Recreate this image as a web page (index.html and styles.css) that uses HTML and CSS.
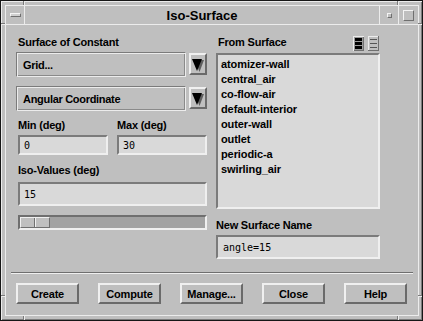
FILE: index.html
```html
<!DOCTYPE html>
<html>
<head>
<meta charset="utf-8">
<title>Iso-Surface</title>
<link rel="stylesheet" href="styles.css">
</head>
<body>
<div class="window">
  <div class="frame">
    <div class="titlebar">
      <div class="tb-btn tb-menu"><span class="menu-bar"></span></div>
      <div class="tb-title">Iso-Surface</div>
      <div class="tb-btn tb-min"><span class="min-box"></span></div>
      <div class="tb-btn tb-max"><span class="max-box"></span></div>
    </div>
    <div class="client">
      <div class="main">
        <div class="col-left">
          <div class="label ind">Surface of Constant</div>
          <div class="combo-row first">
            <div class="combo">Grid...</div>
            <div class="arrow-btn"><svg width="12" height="13" viewBox="0 0 12 13"><polygon points="3,1 12,1 7.5,13" fill="#5e5e5e"/><polygon points="0,0 10,0 5,12" fill="#000"/></svg></div>
          </div>
          <div class="combo-row second">
            <div class="combo">Angular Coordinate</div>
            <div class="arrow-btn"><svg width="12" height="13" viewBox="0 0 12 13"><polygon points="3,1 12,1 7.5,13" fill="#5e5e5e"/><polygon points="0,0 10,0 5,12" fill="#000"/></svg></div>
          </div>
          <div class="pair pair-labels">
            <div class="label half">Min (deg)</div>
            <div class="label half">Max (deg)</div>
          </div>
          <div class="pair pair-fields">
            <div class="field small half">0</div>
            <div class="field small half">30</div>
          </div>
          <div class="label ind iso-label">Iso-Values (deg)</div>
          <div class="field iso">15</div>
          <div class="slider"><div class="thumb"><span class="thumb-l"></span><span class="thumb-r"></span></div></div>
        </div>
        <div class="col-right">
          <div class="list-head">
            <div class="label">From Surface</div>
            <div class="icons">
              <svg class="ico" width="11" height="15" viewBox="0 0 11 15">
                <rect x="0" y="0" width="11" height="15" fill="#ececec"/>
                <rect x="1" y="1" width="10" height="14" fill="#6f6f6f"/>
                <rect x="1" y="1" width="9" height="13" fill="#9a9a9a"/>
                <rect x="2" y="2" width="7" height="3" fill="#000"/>
                <rect x="2" y="6" width="7" height="3" fill="#000"/>
                <rect x="2" y="10" width="7" height="3" fill="#000"/>
              </svg>
              <svg class="ico" width="11" height="15" viewBox="0 0 11 15">
                <rect x="0" y="0" width="11" height="15" fill="#6f6f6f"/>
                <rect x="0" y="0" width="10" height="14" fill="#ececec"/>
                <rect x="1" y="1" width="9" height="13" fill="#bfbfbf"/>
                <rect x="2" y="3" width="7" height="1" fill="#555"/>
                <rect x="2" y="7" width="7" height="1" fill="#555"/>
                <rect x="2" y="11" width="7" height="1" fill="#555"/>
              </svg>
            </div>
          </div>
          <div class="list">
            <div class="item">atomizer-wall</div>
            <div class="item">central_air</div>
            <div class="item">co-flow-air</div>
            <div class="item">default-interior</div>
            <div class="item">outer-wall</div>
            <div class="item">outlet</div>
            <div class="item">periodic-a</div>
            <div class="item">swirling_air</div>
          </div>
          <div class="label name-label">New Surface Name</div>
          <div class="field name">angle=15</div>
        </div>
      </div>
      <div class="separator"></div>
      <div class="buttons">
        <div class="btn">Create</div>
        <div class="btn">Compute</div>
        <div class="btn">Manage...</div>
        <div class="btn">Close</div>
        <div class="btn">Help</div>
      </div>
    </div>
  </div>
  <span class="mark mv mt ml"></span>
  <span class="mark mv mt mr"></span>
  <span class="mark mv mb ml"></span>
  <span class="mark mv mb mr"></span>
  <span class="mark mh hl ht"></span>
  <span class="mark mh hr ht"></span>
  <span class="mark mh hl hb"></span>
  <span class="mark mh hr hb"></span>
</div>
</body>
</html>
```

FILE: styles.css
```css
* { box-sizing: border-box; }
html, body { margin: 0; padding: 0; }
body {
  width: 423px;
  height: 321px;
  overflow: hidden;
  background: #bfbfbf;
  font-family: "Liberation Sans", Arial, sans-serif;
  color: #000;
}

.window {
  position: relative;
  width: 423px;
  height: 321px;
  border: 1px solid #161616;
  background: #bfbfbf;
  padding: 4px 3px 4px 4px;
  box-shadow: inset 1px 1px 0 #ececec, inset -1px -1px 0 #7b7b7b;
}

.frame {
  height: 100%;
  border: 1px solid #ececec;
  display: flex;
  flex-direction: column;
}

/* title bar */
.titlebar {
  flex: none;
  height: 19px;
  display: flex;
  border-bottom: 1px solid #ececec;
}
.tb-btn {
  flex: none;
  display: flex;
  align-items: center;
  justify-content: center;
}
.tb-menu { width: 19px; border-right: 1px solid #ececec; justify-content: flex-start; padding-left: 4px; }
.tb-min { width: 19px; border-left: 1px solid #ececec; }
.tb-max { width: 20px; border-left: 1px solid #ececec; }
.tb-title {
  flex: 1;
  text-align: center;
  font-weight: bold;
  font-size: 13px;
  line-height: 18px;
  padding-top: 1px;
}
.menu-bar {
  display: block;
  width: 11px;
  height: 4px;
  border: 1px solid;
  border-color: #f4f4f4 #6f6f6f #6f6f6f #f4f4f4;
  background: #cfcfcf;
}
.min-box {
  display: block;
  width: 5px;
  height: 5px;
  border: 1px solid;
  border-color: #f4f4f4 #6f6f6f #6f6f6f #f4f4f4;
}
.max-box {
  display: block;
  width: 11px;
  height: 11px;
  margin-right: 1px;
  border: 1px solid;
  border-color: #f4f4f4 #6f6f6f #6f6f6f #f4f4f4;
}

/* client */
.client {
  flex: 1;
  display: flex;
  flex-direction: column;
  padding: 11px 0 0 10px;
}
.main { display: flex; gap: 9px; }
.col-left { width: 191px; display: flex; flex-direction: column; }
.col-right { width: 164px; display: flex; flex-direction: column; }

.label {
  font-weight: bold;
  font-size: 11px;
  line-height: 13px;
  height: 13px;
  white-space: nowrap;
  letter-spacing: -0.2px;
}
.ind { margin-left: 2px; }

.combo-row { display: flex; gap: 3px; align-items: flex-start; }
.combo-row.first { margin-top: 3px; }
.combo-row.second { margin-top: 9px; }
.combo {
  width: 170px;
  height: 25px;
  border: 1px solid;
  border-color: #7b7b7b #ececec #ececec #7b7b7b;
  box-shadow: inset 1px 1px 0 #ececec, inset -1px -1px 0 #8a8a8a;
  padding-left: 6px;
  display: flex;
  align-items: center;
  font-weight: bold;
  font-size: 11px;
  letter-spacing: -0.3px;
}
.arrow-btn {
  width: 18px;
  height: 22px;
  margin-top: 1px;
  border: 2px solid;
  border-color: #f0f0f0 #6a6a6a #6a6a6a #f0f0f0;
  display: flex;
  justify-content: center;
  align-items: flex-start;
  padding-top: 4px;
  padding-right: 1px;
}

.pair { display: flex; gap: 9px; margin-left: 2px; }
.half { width: 90px; }
.pair-labels { margin-top: 8px; }
.pair-fields { margin-top: 3px; }

.field {
  background: #d9d9d9;
  border: 2px solid;
  border-color: #7b7b7b #efefef #efefef #7b7b7b;
  display: flex;
  align-items: center;
  padding-left: 4px;
  font-family: "DejaVu Sans Mono", "Liberation Mono", monospace;
  font-size: 10px;
}
.field.small { height: 20px; }
.iso-label { margin-top: 9px; }
.field.iso { margin: 5px 0 0 2px; height: 24px; width: 189px; }

.slider {
  margin: 9px 0 0 2px;
  width: 189px;
  height: 15px;
  border: 2px solid;
  border-color: #6f6f6f #efefef #efefef #6f6f6f;
  background: #a2a2a2;
  display: flex;
}
.thumb {
  width: 30px;
  height: 11px;
  border: 1px solid;
  border-color: #f0f0f0 #6f6f6f #6f6f6f #f0f0f0;
  background: #bfbfbf;
  display: flex;
}
.thumb-l { width: 14px; border-right: 1px solid #6f6f6f; }
.thumb-r { flex: 1; border-left: 1px solid #f0f0f0; }

/* right column */
.list-head { display: flex; justify-content: space-between; height: 15px; }
.list-head .label { margin-left: 2px; }
.icons { display: flex; gap: 4px; margin-right: 1px; }
.ico { display: block; }

.list {
  margin-top: 2px;
  height: 156px;
  background: #d9d9d9;
  border: 2px solid;
  border-color: #7b7b7b #efefef #efefef #7b7b7b;
  padding: 2px 3px;
}
.item {
  font-weight: bold;
  font-size: 11px;
  line-height: 15px;
  height: 15px;
  letter-spacing: -0.1px;
}
.name-label { margin-top: 10px; }
.field.name { margin-top: 3px; height: 24px; padding-left: 5px; }

/* bottom */
.separator {
  margin: 13px 5px 0 -5px;
  height: 2px;
  border-top: 1px solid #6f6f6f;
  border-bottom: 1px solid #efefef;
}
.buttons { display: flex; gap: 19px; margin-top: 9px; }
.btn {
  width: 63px;
  height: 21px;
  border: 2px solid;
  border-color: #f0f0f0 #6a6a6a #6a6a6a #f0f0f0;
  display: flex;
  align-items: center;
  justify-content: center;
  font-weight: bold;
  font-size: 11px;
  letter-spacing: -0.2px;
}

/* frame resize-corner marks */
.mark { position: absolute; display: block; }
.mv { width: 2px; height: 4px; border-left: 1px solid #7b7b7b; border-right: 1px solid #ececec; }
.mt { top: 0; }
.mb { bottom: 0; }
.ml { left: 22px; }
.mr { left: 396px; }
.mh { width: 4px; height: 2px; border-top: 1px solid #7b7b7b; border-bottom: 1px solid #ececec; }
.hl { left: 0; }
.hr { right: 0; }
.ht { top: 22px; }
.hb { top: 294px; }
```
